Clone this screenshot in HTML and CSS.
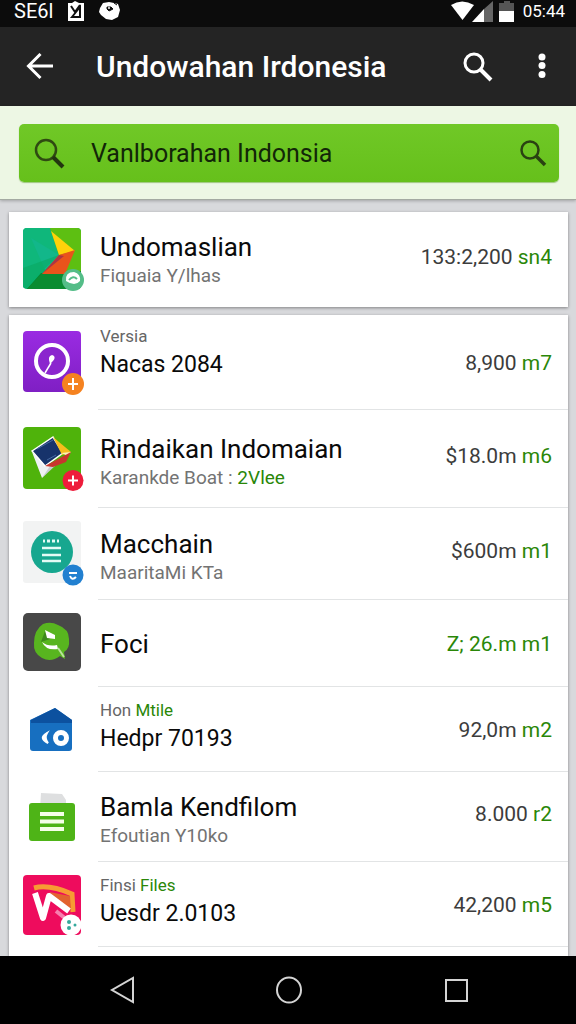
FILE: index.html
```html
<!DOCTYPE html>
<html lang="id">
<head>
<meta charset="utf-8">
<meta name="viewport" content="width=device-width, initial-scale=1">
<title>Undowahan Irdonesia</title>
<link rel="stylesheet" href="styles.css">
</head>
<body>
<div class="screen">
  <div class="status">
    <span>SE6l</span>
    <svg width="18" height="20" viewBox="0 0 18 20"><path fill="#fff" d="M1 2h4l3-2 4 2h5v18H1z"/><path d="M4 5l4 6 5-7M5 16l8-10v10z" fill="none" stroke="#111" stroke-width="2"/></svg>
    <svg width="22" height="20" viewBox="0 0 22 20"><path fill="#fff" d="M1 7 4 2l6-1 5 1 4 1 2 6-2 7-6 3-6-1-5-4-2-3z"/><path d="M8 6h4l2 2-4 2-2-2zM15 2l3 2" fill="#111" stroke="#111"/><circle cx="10" cy="7" r="1" fill="#fff"/></svg>
    <span class="status-right">
      <svg width="66" height="21" viewBox="0 0 66 21"><path fill="#fff" d="M0 4Q11-3 23 4L11.500 19z"/><path fill="#fff" d="M21 21 33 8v13z"/><path fill="#666" d="M33 8 42 0v21h-9z"/><path fill="#555" d="M48 2h5V0h6v2h4v9H48z"/><path fill="#fff" d="M48 10h15v11H48z"/></svg>
      <time>05:44</time>
    </span>
  </div>
  <header class="appbar">
    <button class="icon-btn" aria-label="Kembali"><svg width="28" height="28" viewBox="0 0 28 28" fill="none" stroke="#fff" stroke-width="3"><path d="M27 13H3M14.500 1 2.500 13l12 12"/></svg></button>
    <h1>Undowahan Irdonesia</h1>
    <button class="icon-btn appbar-search" aria-label="Cari"><svg width="30" height="30" viewBox="0 0 30 30" fill="none" stroke="#fff" stroke-width="3"><circle cx="11" cy="11" r="9"/><path d="m17 17 11 11" stroke-width="4"/></svg></button>
    <button class="icon-btn" aria-label="Menu"><svg width="8" height="28" viewBox="0 0 8 28" fill="#fff"><circle cx="4" cy="4" r="3.500"/><circle cx="4" cy="12.500" r="3.500"/><circle cx="4" cy="21.500" r="3.500"/></svg></button>
  </header>
  <form class="search">
    <div class="search-box">
      <svg width="31" height="31" viewBox="0 0 31 31" fill="none" stroke="#2f4a12" stroke-width="2.500"><circle cx="12" cy="12" r="10"/><path d="m19 19 10 10" stroke="#233510" stroke-width="4"/></svg>
      <input type="text" aria-label="Cari" value="Vanlborahan Indonsia">
      <button type="button" class="icon-btn" aria-label="Cari"><svg width="27" height="27" viewBox="0 0 27 27" fill="none" stroke="#2a4212" stroke-width="2.500"><circle cx="10" cy="10" r="8.500"/><path d="m16 16 9 9" stroke-width="3.500"/></svg></button>
    </div>
  </form>
  <main>
    <section class="card">
      <div class="row row--first">
        <div class="icon">
          <svg width="62" height="64" viewBox="0 0 62 64">
            <defs><clipPath id="r1"><rect y="0" width="58" height="61" rx="4"/></clipPath></defs>
            <g clip-path="url(#r1)"><path fill="#08b06b" d="M0 0h58v61H0z"/><path fill="#0fb77b" d="M0 0h28l9 26L0 61z"/><path fill="#12b78a" d="m8 10 28 17-14 15z"/><path fill="#5dbf12" d="M27 0h31v46H42z"/><path fill="#08a55c" d="m36 27-36 34V40z" opacity=".5"/><path fill="#078434" d="m18 45 22 0 18-2v18H4z"/><path fill="#0a8c31" d="m4 61 15-16h30l9 16z"/><path fill="#ffd20a" d="m28 3 24 20-16 4z"/><path fill="#e9541b" d="m36 27 16-5-10 24H19z"/><path fill="#ae3544" d="m36 27-17 19 22-18z"/></g>
            <circle cx="50" cy="52" r="11" fill="#54bd88"/><path d="M43 53q-1-9 8-9 7 2 6 9-5 6-14 0z" fill="#fff"/><path d="M46 52q4-5 8-1" stroke="#54bd88" stroke-width="2" fill="none"/>
          </svg>
        </div>
        <div class="text"><h2>Undomaslian</h2><p class="sub">Fiquaia Y/lhas</p></div>
        <p class="price price--raised">133:2,200 <b>sn4</b></p>
      </div>
    </section>
    <section class="card card--list">
      <div class="row row--version">
        <div class="icon">
          <svg width="62" height="64" viewBox="0 0 62 64">
            <defs><linearGradient id="pu" x2="0" y2="1"><stop stop-color="#9a2be2"/><stop offset="1" stop-color="#7f1fc4"/></linearGradient></defs>
            <rect width="58" height="61" rx="4" fill="url(#pu)"/><circle cx="29" cy="30" r="16" fill="#8b25ce" stroke="#fff" stroke-width="4"/><path d="M22 42l6-10" stroke="#fff" stroke-width="1.500"/><path d="M27 33q-3-8 2-9 6 2-2 9z" fill="#fff"/>
            <circle cx="50" cy="53" r="11" fill="#f58220"/><path d="M50 47v12M45 53h10" stroke="#fff" stroke-width="2"/>
          </svg>
        </div>
        <div class="text"><p class="label">Versia</p><h3>Nacas 2084</h3></div>
        <p class="price">8,900 <b>m7</b></p>
      </div>
      <div class="row row--h98">
        <div class="icon">
          <svg width="62" height="64" viewBox="0 0 62 64">
            <rect width="58" height="62" rx="4" fill="#4fb30b"/><path fill="#eef1f3" d="m9 25 10 26 11-12-8-3z"/><path fill="#c9ced2" d="m19 51 10-15 4 2z"/><path fill="#17336b" d="m9 24 21-14 10 16-18 13z"/><path d="m9 24 21-14 10 16-18 13z" fill="none" stroke="#fff" stroke-width="1.500"/><path d="m14 22 16-9M24 33l9-5" stroke="#466aa2"/><path fill="#f6bd1c" d="m30 10 18 15-9 3z"/><path fill="#fff2b9" d="m38 26 10-1-3 4z"/><path fill="#c8352d" d="m22 39 26-14-5 10-13 5z"/>
            <circle cx="50" cy="53.500" r="10.500" fill="#ee1c3b"/><path d="M50 48.500v10M45 53.500h10" stroke="#fff" stroke-width="2"/>
          </svg>
        </div>
        <div class="text text--title"><h2>Rindaikan Indomaian</h2><p class="sub">Karankde Boat : <b>2Vlee</b></p></div>
        <p class="price price--raised">$18.0m <b>m6</b></p>
      </div>
      <div class="row row--h92">
        <div class="icon">
          <svg width="62" height="66" viewBox="0 0 62 66">
            <rect width="58" height="62" rx="3" fill="#f2f3f3"/><circle cx="29" cy="31" r="21" fill="#17a78f"/><path d="M19 27h19M19 34h19M19 40h19" stroke="#e4fbf5" stroke-width="2.500"/><path d="M20 20h2M24 20h3M29 20h3M34 20h2" stroke="#e4fbf5" stroke-width="3"/>
            <circle cx="50" cy="54" r="10.500" fill="#2280d0"/><path d="M46 52h8M47 55q2 5 6 1" stroke="#fff" stroke-width="2" fill="none"/>
          </svg>
        </div>
        <div class="text text--title"><h2>Macchain</h2><p class="sub">MaaritaMi KTa</p></div>
        <p class="price price--raised">$600m <b>m1</b></p>
      </div>
      <div class="row row--h87">
        <div class="icon">
          <svg width="58" height="61" viewBox="0 0 58 61">
            <rect width="58" height="58" rx="5" fill="#484848"/><path fill="#58b51f" d="M20 11q8-3 15 1 11 4 11 14 1 10-5 13l1 7-5-3q-9 7-18 2-9-5-8-15 0-13 9-19z"/><path fill="#3d8a1c" d="m22 18-4 11 9-3z"/><path fill="#fff" d="m22 17 10 5v4l-8-1zM19 29q6 5 15 3l1 4q-12 2-16-7z"/><path d="m35 35 6 9" stroke="#b9e49b" stroke-width="2"/>
          </svg>
        </div>
        <div class="text"><h2>Foci</h2></div>
        <p class="price price--green">Z; 26.m <b>m1</b></p>
      </div>
      <div class="row row--h85">
        <div class="icon">
          <svg width="58" height="44" viewBox="0 0 58 44">
            <path fill="#176fc0" d="M7 12 32 0l17 12v28q0 3-3 3H10q-3 0-3-3z"/><path fill="#0c519f" d="m8 12 24-12 17 12v3H8z"/><path d="M24 25q-9 5 1 10-4-5-1-10z" fill="#fff" stroke="#fff" stroke-width="2"/><circle cx="38" cy="30" r="5.500" fill="#176fc0" stroke="#fff" stroke-width="5"/>
          </svg>
        </div>
        <div class="text text--labelled"><p class="label">Hon <b>Mtile</b></p><h3>Hedpr 70193</h3></div>
        <p class="price">92,0m <b>m2</b></p>
      </div>
      <div class="row row--h90">
        <div class="icon">
          <svg width="58" height="49" viewBox="0 0 58 49">
            <path fill="#dedfe0" d="m18 0 21 1 4 6v8H17z"/><rect x="6" y="10" width="46" height="38" rx="3" fill="#4eb417"/><path d="M17 21h24M17 28.500h24M17 36h24" stroke="#f5ffe9" stroke-width="4"/>
          </svg>
        </div>
        <div class="text text--title"><h2>Bamla Kendfilom</h2><p class="sub">Efoutian Y10ko</p></div>
        <p class="price price--raised">8.000 <b>r2</b></p>
      </div>
      <div class="row row--h85">
        <div class="icon">
          <svg width="62" height="60" viewBox="0 0 62 60">
            <rect width="58" height="60" rx="4" fill="#ee0c5d"/><path d="M11 13q15-4 38 6l1 18" fill="none" stroke="#f79b33" stroke-width="5"/><path d="m26 17 21 4 1 15z" fill="#e2632f"/><path d="m12 18 8 25 6-22 20 15" fill="none" stroke="#fff" stroke-width="6" stroke-linejoin="round"/><path d="m33 36 10 8" stroke="#f77eae" stroke-width="4"/>
            <circle cx="48" cy="50" r="10.500" fill="#fff"/><circle cx="46" cy="47" r="2" fill="#35a99c"/><circle cx="52" cy="50" r="1.500" fill="#35a99c"/><circle cx="46" cy="53" r="2" fill="#35a99c"/>
          </svg>
        </div>
        <div class="text text--labelled"><p class="label">Finsi <b>Files</b></p><h3>Uesdr 2.0103</h3></div>
        <p class="price">42,200 <b>m5</b></p>
      </div>
    </section>
  </main>
  <nav class="navbar">
    <button class="icon-btn" aria-label="Kembali"><svg width="26" height="28" viewBox="0 0 26 28" fill="none" stroke="#d4d4d4" stroke-width="2"><path d="M24 2v24L3 14z"/></svg></button>
    <button class="icon-btn" aria-label="Beranda"><svg width="26" height="28" viewBox="0 0 26 28" fill="none" stroke="#d4d4d4" stroke-width="2"><ellipse cx="13" cy="14" rx="12" ry="12.500"/></svg></button>
    <button class="icon-btn" aria-label="Terbaru"><svg width="26" height="28" viewBox="0 0 26 28" fill="none" stroke="#d4d4d4" stroke-width="2"><rect x="3" y="4" width="21" height="21"/></svg></button>
  </nav>
</div>
</body>
</html>
```
FILE: styles.css
```css
* { box-sizing: border-box; }
body { margin: 0; font-family: Roboto, "Liberation Sans", sans-serif; background: #d8d9dc; color: #0a0a0a; }
h1, h2, h3, p { margin: 0; font-weight: 400; }
b { font-weight: 400; color: #2a8708; }
svg { display: block; flex: none; }
.screen { min-height: 100vh; display: flex; flex-direction: column; }
.icon-btn { display: flex; padding: 0; border: 0; background: none; }

.status { height: 27px; padding: 0 11px 5px 14px; display: flex; align-items: center; gap: 14px; background: #0c0c0c; color: #fff; font-size: 20px; line-height: 22px; }
.status-right { margin-left: auto; display: flex; align-items: center; gap: 6px; }
.status-right time { font-size: 17px; }

.appbar { height: 79px; padding: 0 30px 0 26px; display: flex; align-items: center; background: #242424; color: #fff; }
.appbar h1 { flex: 1; margin-left: 42px; font-size: 30px; font-weight: 500; line-height: 36px; white-space: nowrap; }
.appbar-search { margin-right: 45px; }

.search { padding: 18px 17px 17px 19px; background: #edf7e4; border-bottom: 1px solid #a4aaa2; box-shadow: 0 1px 3px #00000040; }
.search-box { height: 58px; padding: 0 12px 0 15px; display: flex; align-items: center; border-radius: 5px; background: linear-gradient(#70c827, #66c01b); box-shadow: 0 1px 1px #4d951680; }
.search-box input { flex: 1; min-width: 0; margin-left: 26px; padding: 2px 0 0; border: 0; outline: 0; background: none; color: #122608; font: 400 25px/32px Roboto, "Liberation Sans", sans-serif; }

main { flex: 1; padding: 12px 8px 0 9px; display: flex; flex-direction: column; gap: 8px; }
.card { background: #fff; box-shadow: 0 1px 3px #00000066; }
.card--list { flex: 1; }
.row { position: relative; display: flex; align-items: center; padding: 0 16px 0 14px; }
.row--first { height: 95px; }
.row--version { height: 95px; }
.row--version .text { padding-bottom: 22px; }
.row--h98 { height: 98px; }
.row--h92 { height: 92px; }
.row--h87 { height: 87px; }
.row--h85 { height: 85px; }
.row--h90 { height: 90px; }
.card--list .row::after { content: ""; position: absolute; left: 89px; right: 0; bottom: 0; height: 1px; background: #e2e4e5; }
.icon { width: 77px; flex: none; }
.text { flex: 1; min-width: 0; white-space: nowrap; }
.text--title { padding-top: 5px; }
.text--labelled { padding-bottom: 7px; }
h2 { font-size: 26px; line-height: 32px; }
h3 { font-size: 23px; line-height: 32px; }
.sub { font-size: 19px; line-height: 26px; color: #737373; }
.label { font-size: 17px; line-height: 26px; color: #666; }
.price { font-size: 21px; line-height: 28px; color: #3c3c3c; white-space: nowrap; }
.price--raised { padding-bottom: 6px; }
.price--green { color: #2a8708; }

.navbar { height: 68px; padding: 0 107px 0 109px; display: flex; align-items: center; justify-content: space-between; background: #000; }
```
